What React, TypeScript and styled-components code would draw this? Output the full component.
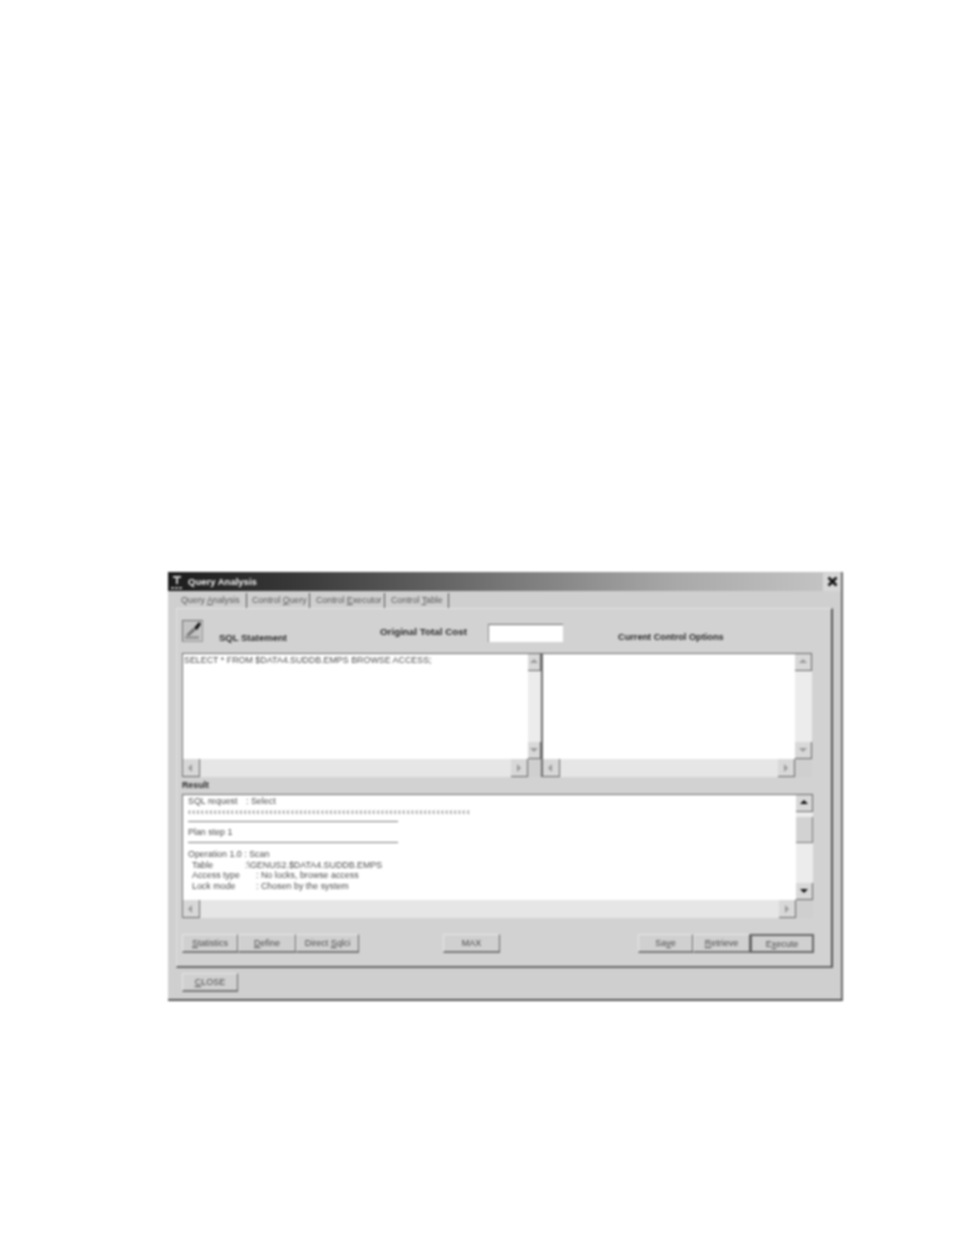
import React from "react";
import styled, { createGlobalStyle } from "styled-components";

const Global = createGlobalStyle`
  html, body { margin: 0; padding: 0; background: #fff; }
  body { font-family: "Liberation Sans", Arial, sans-serif; }
`;

const Page = styled.div`
  width: 954px;
  height: 1235px;
  padding: 572px 0 0 168px;
  box-sizing: border-box;
`;

const Win = styled.div`
  width: 675px;
  height: 429px;
  box-sizing: border-box;
  background: #cfcfcf;
  border-right: 2px solid #6c6c6c;
  border-bottom: 2px solid #555;
  display: flex;
  flex-direction: column;
  filter: blur(0.8px);
  color: #333;
`;

const TitleBar = styled.div`
  height: 19px;
  flex: none;
  display: flex;
  align-items: center;
  background: linear-gradient(90deg, #1c1c1c 0%, #3a3a3a 20%, #777 50%, #a8a8a8 75%, #c6c6c6 100%);
  color: #f2f2f2;
  font-size: 9.5px;
  font-weight: bold;
  padding-left: 2px;
`;

const TitleText = styled.span`
  margin-left: 1px;
  flex: 1;
`;

const CloseBox = styled.div`
  width: 18px;
  height: 18px;
  background: #d8d8d8;
  display: flex;
  align-items: center;
  justify-content: center;
`;

const TabRow = styled.div`
  height: 17px;
  flex: none;
  display: flex;
  align-items: center;
  padding: 2px 0 0 13px;
  box-sizing: border-box;
`;

const Tab = styled.div<{ $w: number; $pad: number }>`
  width: ${p => p.$w}px;
  padding-left: ${p => p.$pad}px;
  height: 15px;
  flex: none;
  box-sizing: border-box;
  font-size: 8.8px;
  line-height: 14px;
  color: #555;
  border-right: 1px solid #555;
  white-space: nowrap;
`;

const Panel = styled.div`
  width: 657px;
  height: 360px;
  margin-left: 8px;
  flex: none;
  box-sizing: border-box;
  background: #d2d2d2;
  border-top: 1px solid #e4e4e4;
  border-left: 1px solid #e0e0e0;
  border-right: 2px solid #555;
  border-bottom: 2px solid #666;
  padding: 11px 0 0 5px;
  display: flex;
  flex-direction: column;
`;

const Header = styled.div`
  height: 33px;
  flex: none;
  display: grid;
  grid-template-columns: 37px 161px 108px 130px 1fr;
`;

const IconBtn = styled.div`
  width: 21px;
  height: 22px;
  box-sizing: border-box;
  border: 1px solid #6e6e6e;
  border-right-color: #999;
  border-bottom-color: #999;
  background: #c4c4c4;
`;

const HeadLabel = styled.div<{ $top: number; $size: number }>`
  font-size: ${p => p.$size}px;
  font-weight: bold;
  color: #2a2a2a;
  padding-top: ${p => p.$top}px;
  white-space: nowrap;
`;

const HeadInput = styled.div`
  width: 75px;
  height: 18px;
  margin-top: 4px;
  box-sizing: border-box;
  background: #fff;
  border-top: 1px solid #666;
  border-left: 1px solid #888;
`;

const SqlRow = styled.div`
  display: flex;
  flex: none;
  height: 124px;
`;

const Pane = styled.div<{ $w: number; $bar?: number; $rule?: boolean }>`
  width: ${p => p.$w}px;
  height: 124px;
  flex: none;
  box-sizing: border-box;
  border-top: 1px solid #666;
  border-left: 1px solid #707070;
  border-right: ${p => (p.$rule ? "1px solid #666" : "none")};
  display: grid;
  grid-template-columns: 1fr ${p => p.$bar ?? 17}px;
  grid-template-rows: 1fr 18px;
  background: #cfcfcf;
`;

const TextArea = styled.div`
  background: #fff;
  padding: 1px 0 0 1px;
  font-size: 8.9px;
  line-height: 11px;
  color: #4a4a4a;
  white-space: nowrap;
  overflow: hidden;
  min-width: 0;
`;

const VBar = styled.div`
  background: #ececec;
  display: flex;
  flex-direction: column;
  justify-content: space-between;
`;

const HBar = styled.div`
  background: #e6e6e6;
  display: flex;
  justify-content: space-between;
`;

const Corner = styled.div`
  background: #cfcfcf;
`;

const VArrow = styled.div`
  width: 100%;
  height: 17px;
  flex: none;
  box-sizing: border-box;
  background: #d8d8d8;
  border-right: 1px solid #666;
  border-bottom: 1px solid #666;
  display: flex;
  align-items: center;
  justify-content: center;
`;

const HArrow = styled(VArrow)`
  width: 17px;
  height: 18px;
`;

const Thumb = styled.div`
  height: 26px;
  flex: none;
  margin-top: 5px;
  box-sizing: border-box;
  background: #d2d2d2;
  border-right: 1px solid #777;
  border-bottom: 1px solid #777;
`;

const Spacer = styled.div`
  flex: 1;
`;

const ResultLabel = styled.div`
  height: 17px;
  flex: none;
  font-size: 8.8px;
  font-weight: bold;
  color: #2a2a2a;
  line-height: 17px;
`;

const ResultText = styled.div`
  background: #fff;
  padding: 1px 0 0 5px;
  font-size: 8.9px;
  color: #4a4a4a;
  overflow: hidden;
  min-width: 0;
  white-space: nowrap;
`;

const Line = styled.div`
  height: 10.7px;
  line-height: 10.7px;
  display: flex;
`;

const Indent = styled(Line)`
  padding-left: 4px;
`;

const Key = styled.span<{ $w: number }>`
  width: ${p => p.$w}px;
  flex: none;
`;

const Rule = styled.div<{ $after: number }>`
  width: 210px;
  height: 1px;
  background: #777;
  margin: 4px 0 ${p => p.$after}px;
`;

const Chevrons = styled.div`
  height: 10.7px;
  line-height: 10.7px;
  font-size: 9px;
  letter-spacing: 1.29px;
  color: #333;
`;

const ButtonRow = styled.div`
  display: flex;
  flex: none;
  margin-top: 16px;
  width: 632px;
`;

const Btn = styled.div<{ $w: number; $ml?: number; $def?: boolean }>`
  width: ${p => p.$w}px;
  height: 19px;
  flex: none;
  box-sizing: border-box;
  margin-left: ${p => p.$ml ?? 0}px;
  background: #d0d0d0;
  border-top: 1px solid #e6e6e6;
  border-left: 1px solid #e6e6e6;
  border-right: 1px solid #666;
  border-bottom: 2px solid #777;
  font-size: 9px;
  color: #4a4a4a;
  display: flex;
  align-items: center;
  justify-content: center;
  ${p => (p.$def ? "border: 2px solid #666;" : "")}
`;

const Footer = styled.div`
  flex: 1;
  display: flex;
  align-items: flex-start;
  padding: 5px 0 0 14px;
`;

const Tri = ({ d, dark }: { d: "u" | "d" | "l" | "r"; dark?: boolean }) => {
  const pts = { u: "4,1 8,5 0,5", d: "0,2 8,2 4,6", l: "5,0 5,8 1,4", r: "2,0 2,8 6,4" }[d];
  return (
    <svg width="8" height="8" viewBox="0 0 8 8">
      <polygon points={pts} fill={dark ? "#111" : "#9a9a9a"} />
    </svg>
  );
};

const Scrolls = ({ dark, thumb }: { dark?: boolean; thumb?: boolean }) => (
  <VBar>
    <VArrow><Tri d="u" dark={dark} /></VArrow>
    {thumb && <Thumb />}
    <Spacer />
    <VArrow><Tri d="d" dark={dark} /></VArrow>
  </VBar>
);

const HScroll = () => (
  <HBar>
    <HArrow><Tri d="l" /></HArrow>
    <HArrow><Tri d="r" /></HArrow>
  </HBar>
);

export default function App() {
  return (
    <Page>
      <Global />
      <Win>
        <TitleBar>
          <svg width="17" height="17" viewBox="0 0 17 17">
            <path d="M3 3h8v2H8v6H6V5H3z" fill="#ccc" />
            <path d="M1 14h3v2H1zM5 14h3v2H5zM9 14h3v2H9z" fill="#aaa" />
          </svg>
          <TitleText>Query Analysis</TitleText>
          <CloseBox>
            <svg width="11" height="11" viewBox="0 0 11 11">
              <path d="M1.5 1.5l8 8M9.5 1.5l-8 8" stroke="#111" strokeWidth="2.6" />
            </svg>
          </CloseBox>
        </TitleBar>
        <TabRow>
          <Tab $w={66} $pad={0}>Query <u>A</u>nalysis</Tab>
          <Tab $w={63} $pad={5}>Control <u>Q</u>uery</Tab>
          <Tab $w={75} $pad={6}>Control <u>E</u>xecutor</Tab>
          <Tab $w={64} $pad={6}>Control <u>T</u>able</Tab>
        </TabRow>
        <Panel>
          <Header>
            <IconBtn>
              <svg width="19" height="20" viewBox="0 0 19 20">
                <path d="M3 14l7-7 3 2-7 6z" fill="#777" />
                <path d="M11 7l5-6 2 2-4 6z" fill="#111" />
                <rect x="2" y="15" width="14" height="3" fill="#999" />
              </svg>
            </IconBtn>
            <HeadLabel $top={12} $size={9.5}>SQL Statement</HeadLabel>
            <HeadLabel $top={6} $size={9.8}>Original Total Cost</HeadLabel>
            <HeadInput />
            <HeadLabel $top={12} $size={9.2}>Current Control Options</HeadLabel>
          </Header>
          <SqlRow>
            <Pane $w={360} $bar={13} $rule>
              <TextArea>SELECT * FROM $DATA4.SUDDB.EMPS BROWSE ACCESS;</TextArea>
              <Scrolls />
              <HScroll />
              <Corner />
            </Pane>
            <Pane $w={270}>
              <TextArea />
              <Scrolls />
              <HScroll />
              <Corner />
            </Pane>
          </SqlRow>
          <ResultLabel>Result</ResultLabel>
          <Pane $w={631}>
            <ResultText>
              <Line><Key $w={58}>SQL request</Key>: Select</Line>
              <Chevrons>{"‹".repeat(66)}</Chevrons>
              <Rule $after={5} />
              <Line>Plan step 1</Line>
              <Rule $after={6} />
              <Line>Operation 1.0 : Scan</Line>
              <Indent><Key $w={53}>Table</Key>:\GENUS2.$DATA4.SUDDB.EMPS</Indent>
              <Indent><Key $w={64}>Access type</Key>: No locks, browse access</Indent>
              <Indent><Key $w={64}>Lock mode</Key>: Chosen by the system</Indent>
            </ResultText>
            <Scrolls dark thumb />
            <HScroll />
            <Corner />
          </Pane>
          <ButtonRow>
            <Btn $w={56}><span><u>S</u>tatistics</span></Btn>
            <Btn $w={58}><span><u>D</u>efine</span></Btn>
            <Btn $w={63}><span>Direct <u>S</u>qlci</span></Btn>
            <Btn $w={57} $ml={84}>MAX</Btn>
            <Btn $w={55} $ml={138}><span>Sa<u>v</u>e</span></Btn>
            <Btn $w={57}><span><u>R</u>etrieve</span></Btn>
            <Btn $w={64} $def><span>E<u>x</u>ecute</span></Btn>
          </ButtonRow>
        </Panel>
        <Footer>
          <Btn $w={56}><span><u>C</u>LOSE</span></Btn>
        </Footer>
      </Win>
    </Page>
  );
}
